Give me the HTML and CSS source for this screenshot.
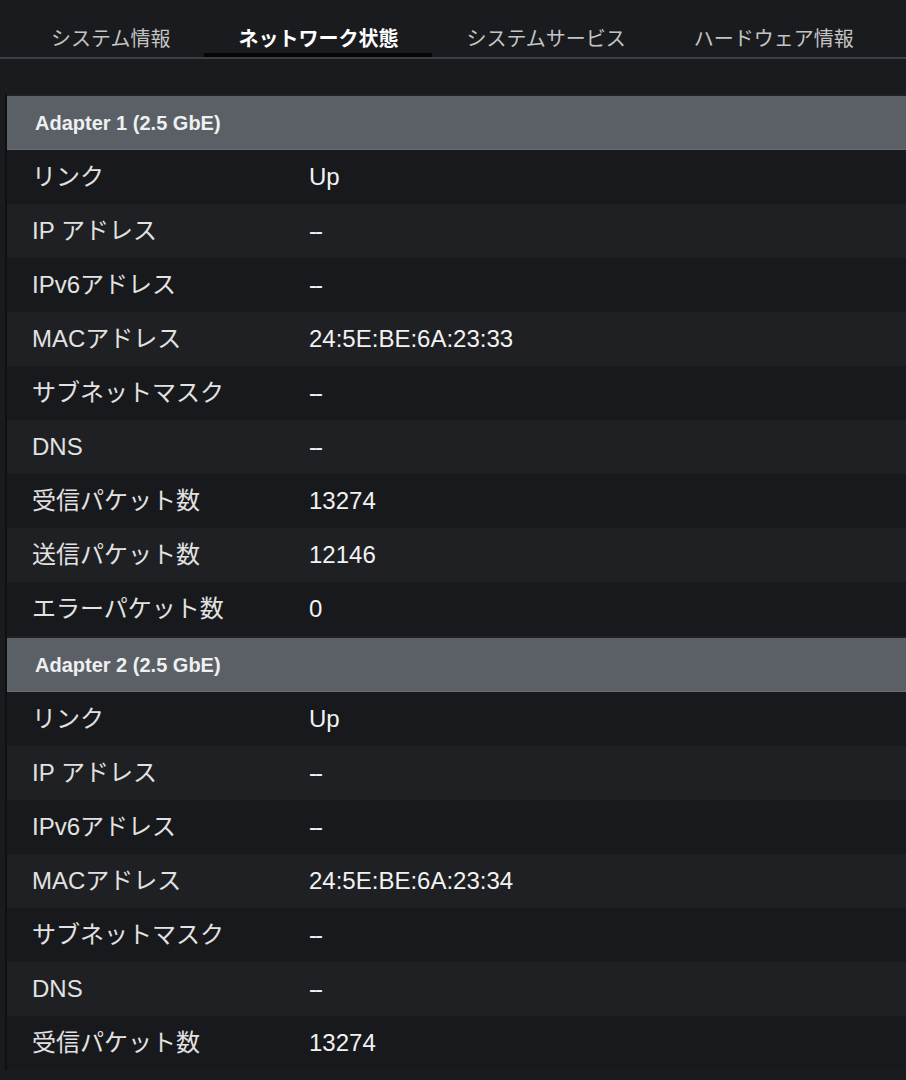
FILE: index.html
```html
<!DOCTYPE html>
<html lang="ja">
<head>
<meta charset="utf-8">
<title>ネットワーク状態</title>
<link rel="stylesheet" href="styles.css">
</head>
<body>
<nav class="tabs">
  <div class="tab">システム情報</div>
  <div class="tab active">ネットワーク状態</div>
  <div class="tab">システムサービス</div>
  <div class="tab">ハードウェア情報</div>
</nav>
<main class="panel">
  <section class="adapter">
    <div class="adapter-head">Adapter 1 (2.5 GbE)</div>
    <div class="row"><span class="label">リンク</span><span class="value">Up</span></div>
    <div class="row"><span class="label">IP アドレス</span><span class="value empty">--</span></div>
    <div class="row"><span class="label">IPv6アドレス</span><span class="value empty">--</span></div>
    <div class="row"><span class="label">MACアドレス</span><span class="value">24:5E:BE:6A:23:33</span></div>
    <div class="row"><span class="label">サブネットマスク</span><span class="value empty">--</span></div>
    <div class="row"><span class="label">DNS</span><span class="value empty">--</span></div>
    <div class="row"><span class="label">受信パケット数</span><span class="value">13274</span></div>
    <div class="row"><span class="label">送信パケット数</span><span class="value">12146</span></div>
    <div class="row"><span class="label">エラーパケット数</span><span class="value">0</span></div>
  </section>
  <section class="adapter">
    <div class="adapter-head">Adapter 2 (2.5 GbE)</div>
    <div class="row"><span class="label">リンク</span><span class="value">Up</span></div>
    <div class="row"><span class="label">IP アドレス</span><span class="value empty">--</span></div>
    <div class="row"><span class="label">IPv6アドレス</span><span class="value empty">--</span></div>
    <div class="row"><span class="label">MACアドレス</span><span class="value">24:5E:BE:6A:23:34</span></div>
    <div class="row"><span class="label">サブネットマスク</span><span class="value empty">--</span></div>
    <div class="row"><span class="label">DNS</span><span class="value empty">--</span></div>
    <div class="row"><span class="label">受信パケット数</span><span class="value">13274</span></div>
  </section>
</main>
</body>
</html>
```
FILE: styles.css
```css
html, body {
  margin: 0;
  padding: 0;
  background: #1a1b1e;
  height: 100%;
}
body {
  font-family: "Liberation Sans", "Noto Sans CJK JP", sans-serif;
  color: #e4e4e4;
}
.tabs {
  display: flex;
  padding-left: 17px;
  border-bottom: 2px solid #3b3e42;
}
.tab {
  padding: 27px 34px 2px;
  font-size: 20px;
  line-height: 24px;
  color: #c4c4c4;
  border-bottom: 4px solid transparent;
  white-space: nowrap;
}
.tab.active {
  color: #ffffff;
  font-weight: bold;
  border-bottom-color: #050505;
}
.panel {
  margin: 35px 0 0 5px;
  border-left: 2px solid #0f1012;
}
.adapter-head {
  height: 54px;
  line-height: 54px;
  border-top: 2px solid #1f2124;
  background: #5a6066;
  box-shadow: inset 0 -1px 0 #686e73;
  padding-left: 28px;
  font-size: 20px;
  font-weight: bold;
  color: #eef0f1;
}
.row {
  display: grid;
  grid-template-columns: 277px 1fr;
  height: 54px;
  line-height: 54px;
  padding-left: 25px;
  font-size: 24px;
  background: #18191c;
}
.row:nth-child(odd) {
  background: #1e2023;
}
.label {
  color: #e2e2e2;
}
.value {
  color: #f2f2f2;
}
.value.empty {
  letter-spacing: -2px;
}
```
